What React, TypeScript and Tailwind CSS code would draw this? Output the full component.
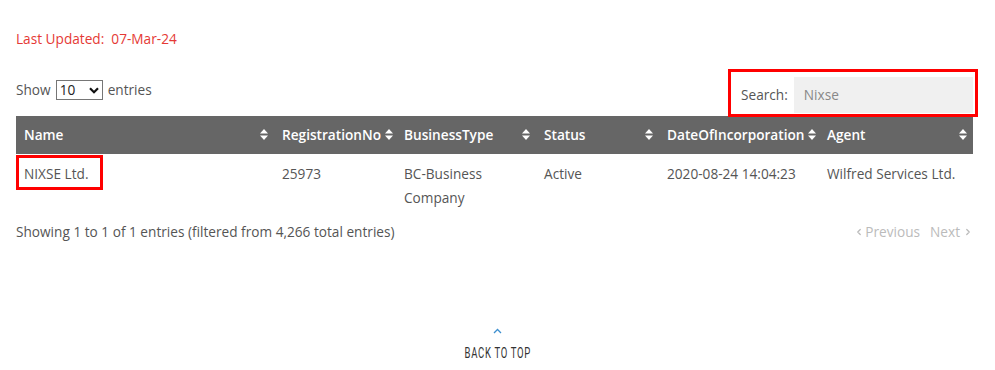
import { ChevronLeft, ChevronRight } from 'lucide-react';

const columns = [
  { label: 'Name', width: 'w-[258px]' },
  { label: 'RegistrationNo', width: 'w-[122px]' },
  { label: 'BusinessType', width: 'w-[140px]' },
  { label: 'Status', width: 'w-[123px]' },
  { label: 'DateOfIncorporation', width: 'w-[160px]' },
  { label: 'Agent', width: 'w-[154px]' },
];

function SortIcon() {
  return (
    <svg width="8" height="11" viewBox="0 0 8 11" className="shrink-0" aria-hidden="true">
      <path d="M4 0 L8 4.5 L0 4.5 Z" fill="#fff" />
      <path d="M4 11 L8 6.5 L0 6.5 Z" fill="#fff" />
    </svg>
  );
}

export default function App() {
  return (
    <div
      className="w-[995px] h-[370px] bg-white text-[13.65px] text-[#555] overflow-hidden"
      style={{ fontFamily: '"Open Sans", "Liberation Sans", sans-serif' }}
    >
      <div className="pl-4 pr-[22px] pt-[29px]">
        <p className="leading-5 text-[#e53935]">Last Updated:&nbsp; 07-Mar-24</p>

        <div className="mt-5 flex justify-between items-start">
          <div className="mt-[11px] flex items-center leading-5">
            <span>Show</span>
            <div className="ml-[5px] mr-[5px] flex items-center justify-between w-[47px] h-[20px] border border-[#767676] pl-[3px] pr-[3px] text-[#222]">
              <span className="leading-none">10</span>
              <svg width="10" height="7" viewBox="0 0 10 7" aria-hidden="true">
                <path d="M1 1.2 L5 5.2 L9 1.2" stroke="#111" strokeWidth="2.2" fill="none" />
              </svg>
            </div>
            <span>entries</span>
          </div>

          <div className="relative z-10 -mr-[5px] flex items-end w-[250px] h-[48px] border-[3px] border-[#f00] pl-[10px] pr-[2px] pb-px">
            <div className="flex items-center h-[36px] w-full">
              <span className="mr-[6px]">Search:</span>
              <div className="flex-1 h-full bg-[#f0f0f0] flex items-center pl-[10px] text-[#888]">Nixse</div>
            </div>
          </div>
        </div>

        <table className="-mt-px w-[957px] table-fixed border-collapse">
          <thead>
            <tr className="bg-[#666] text-white h-[38px]">
              {columns.map((c) => (
                <th key={c.label} className={`${c.width} pl-2 pr-[6px] text-left font-semibold`}>
                  <div className="flex items-center justify-between gap-1">
                    <span className="whitespace-nowrap">{c.label}</span>
                    <SortIcon />
                  </div>
                </th>
              ))}
            </tr>
          </thead>
          <tbody>
            <tr className="align-top leading-6">
              <td className="relative py-2 pl-2">
                <span className="absolute left-0 top-px w-[87px] h-[35px] border-[3px] border-[#f00]" />
                NIXSE Ltd.
              </td>
              <td className="py-2 pl-2">25973</td>
              <td className="py-2 pl-2 pr-2">BC-Business Company</td>
              <td className="py-2 pl-2">Active</td>
              <td className="py-2 pl-2 whitespace-nowrap">2020-08-24 14:04:23</td>
              <td className="py-2 pl-2 whitespace-nowrap">Wilfred Services Ltd.</td>
            </tr>
          </tbody>
        </table>

        <div className="mt-[4px] flex justify-between items-center leading-5 w-[957px]">
          <span>Showing 1 to 1 of 1 entries (filtered from 4,266 total entries)</span>
          <div className="flex items-center text-[#bbb]">
            <ChevronLeft className="w-[10px] h-[10px] mr-px" strokeWidth={3} />
            <span>Previous</span>
            <span className="ml-[10px]">Next</span>
            <ChevronRight className="w-[10px] h-[10px] ml-[3px]" strokeWidth={3} />
          </div>
        </div>
      </div>

      <div className="mt-[86px] flex flex-col items-center">
        <svg width="9" height="6" viewBox="0 0 9 6" aria-hidden="true">
          <path d="M1 5 L4.5 1.5 L8 5" stroke="#3d8fcf" strokeWidth="1.3" fill="none" />
        </svg>
        <span
          className="mt-[11px] inline-block text-[14px] leading-4 tracking-[1px] text-[#333] uppercase scale-x-[0.68]"
          style={{ fontFamily: 'Roboto, sans-serif' }}
        >
          Back to top
        </span>
      </div>
    </div>
  );
}
